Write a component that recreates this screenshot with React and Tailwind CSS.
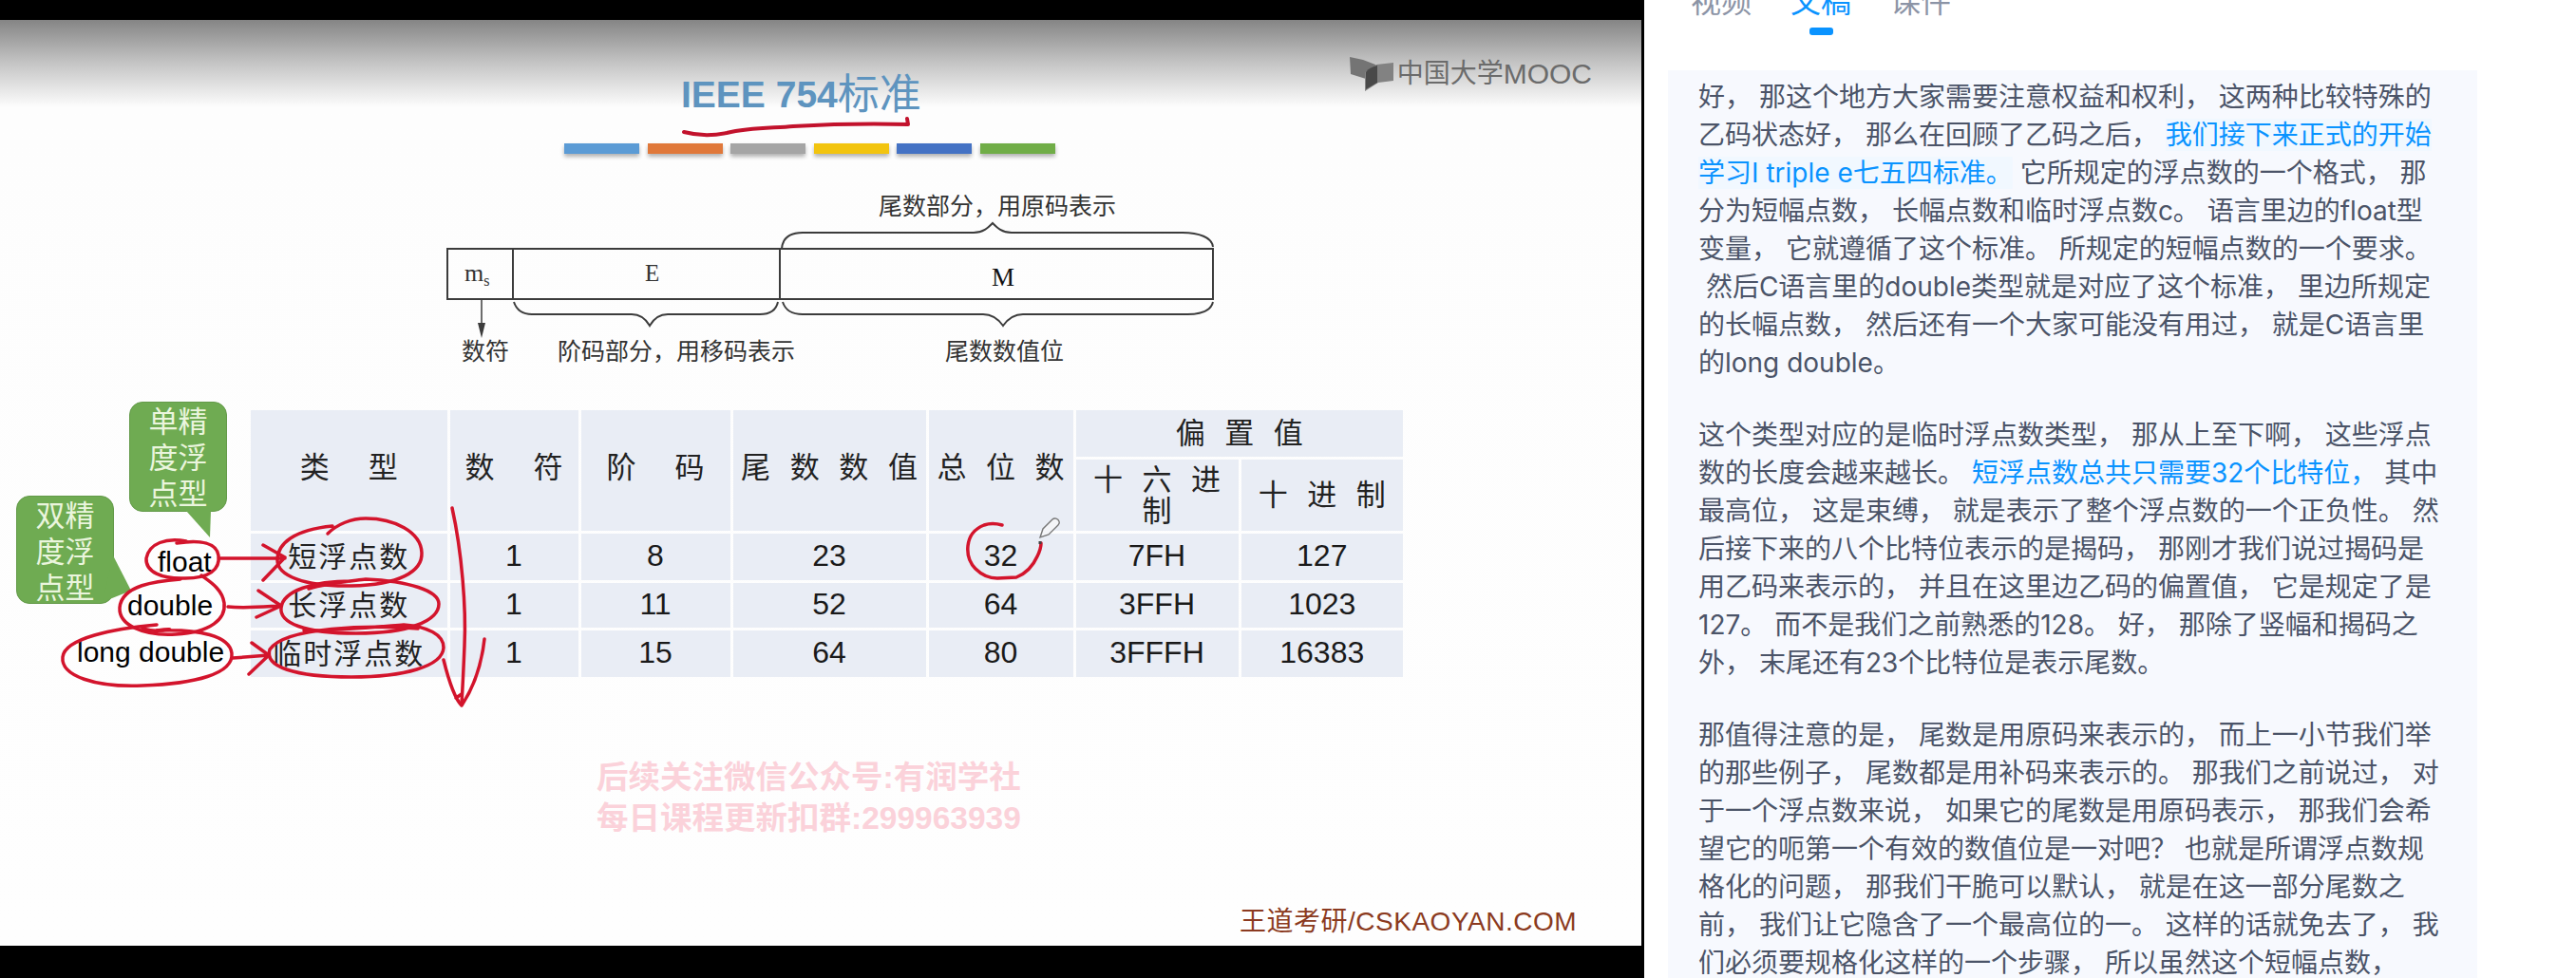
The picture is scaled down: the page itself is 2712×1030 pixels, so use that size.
const CJK = "font-['Liberation_Sans','Noto_Sans_CJK_SC',sans-serif]";

const barColors = ['bg-[#5b9bd5]', 'bg-[#e0783a]', 'bg-[#a5a5a5]', 'bg-[#f2c40f]', 'bg-[#4472c4]', 'bg-[#70ad47]'];

const rows = [
  ['短浮点数', '1', '8', '23', '32', '7FH', '127'],
  ['长浮点数', '1', '11', '52', '64', '3FFH', '1023'],
  ['临时浮点数', '1', '15', '64', '80', '3FFFH', '16383'],
];

function Cell({ className = '', children }) {
  return <div className={`bg-[#e9edf5] flex items-center justify-center text-center ${className}`}>{children}</div>;
}

function Head({ className = '', children }) {
  return (
    <Cell className={`text-[31px] leading-[33px] text-[#222] whitespace-pre-wrap [word-spacing:12px] ${className}`}>
      {children}
    </Cell>
  );
}

function FloatTable() {
  return (
    <div className="ml-[264px] mt-[42px] w-[1213px] grid grid-cols-[206.5px_135px_157px_203px_152px_171px_170.5px] grid-rows-[49px_75px_49px_47px_49px] gap-[3px]">
      <Head className="row-span-2 pb-[6px]">类  型</Head>
      <Head className="row-span-2 pb-[6px]">数  符</Head>
      <Head className="row-span-2 pb-[6px]">阶  码</Head>
      <Head className="row-span-2 pb-[6px]">尾 数 数 值</Head>
      <Head className="row-span-2 pb-[6px]">总 位 数</Head>
      <Head className="col-span-2">偏 置 值</Head>
      <Head className="px-[10px]">十 六 进 制</Head>
      <Head>十 进 制</Head>
      {rows.map((row) =>
        row.map((v, i) => (
          <Cell key={row[0] + i} className={i === 0 ? 'text-[30px] tracking-[2px] text-[#222]' : 'text-[32px] text-[#1a1a1a] pb-[4px]'}>
            {v}
          </Cell>
        ))
      )}
    </div>
  );
}

// 尾数/阶码 bit layout, drawn in page coordinates
function Diagram() {
  return (
    <svg className="block ml-[460px] mt-[38px]" width="840" height="190" viewBox="460 200 840 190" fill="none" stroke="#3c3c3c">
      <rect x="471" y="262" width="806" height="53" strokeWidth="2" />
      <path d="M540 262V315M821 262V315" strokeWidth="2" />
      <path d="M823 262C824 250 832 245 845 245H1025C1035 245 1040 240 1045 235C1050 240 1055 245 1065 245H1245C1262 245 1276 250 1277 260" strokeWidth="2" />
      <path d="M541 318C544 327 550 331 560 331H665C675 331 680 336 684 343C688 336 693 331 703 331H800C810 331 817 327 819 318" strokeWidth="2" />
      <path d="M824 318C827 327 833 331 845 331H1035C1045 331 1051 336 1056 343C1061 336 1067 331 1077 331H1250C1265 331 1275 327 1277 318" strokeWidth="2" />
      <path d="M507 315V350" strokeWidth="1.5" />
      <path d="M503 340L507 356L511 340Z" fill="#3c3c3c" stroke="none" />
      <g fill="#333" stroke="none" fontFamily="'Liberation Serif','Noto Sans CJK SC',serif" fontSize="25">
        <text x="489" y="296" fontSize="26">m<tspan fontSize="16" dy="5">s</tspan></text>
        <text x="679" y="296">E</text>
        <text x="1044" y="301" fontSize="27" fill="#111">M</text>
        <text x="925" y="226">尾数部分，用原码表示</text>
        <text x="486" y="379">数符</text>
        <text x="587" y="379">阶码部分，用移码表示</text>
        <text x="995" y="379">尾数数值位</text>
      </g>
    </svg>
  );
}

// pen annotations from the recorded lecture, plus the callout tails
function InkLayer() {
  return (
    <svg className="absolute inset-0 pointer-events-none" width="1728" height="975" viewBox="0 21 1728 975" fill="none">
      <path d="M196 538L222 538L221 566Z" fill="#6fab52" />
      <path d="M119 585L138 622L108 634Z" fill="#6fab52" />
      <g stroke="#d3142c" strokeWidth="3.5" strokeLinecap="round" strokeLinejoin="round">
        <path d="M720 139C735 143 750 143 765 140C790 134 815 135 835 133C870 131 920 130 956 131L955 125" stroke="#c2122c" strokeWidth="4" />
        <path d="M196 570C175 566 157 572 154 588C153 602 170 610 195 609C220 609 232 600 230 585C228 572 212 568 186 572" />
        <path d="M190 610C165 612 128 616 126 640C125 658 150 670 185 668C222 666 238 652 236 635C234 620 220 612 212 606" />
        <path d="M165 658C120 662 68 672 66 692C64 712 100 724 150 722C205 720 246 710 244 688C242 670 210 662 165 664C195 660 170 668 150 662" />
        <path d="M350 554C310 558 292 572 292 590C292 606 320 618 370 617C420 616 445 602 444 582C443 560 415 546 385 546C370 546 355 552 345 562" />
        <path d="M370 612C330 612 298 622 296 640C294 656 320 667 375 667C430 667 462 654 462 636C462 622 430 612 385 610C370 612 345 614 325 620" />
        <path d="M440 662C390 658 300 660 284 684C278 702 310 713 370 713C425 713 466 702 467 682C467 668 450 660 425 658C400 660 360 664 320 664" />
        <path d="M231 588H300M277 574L300 587L277 611" />
        <path d="M240 639C258 641 278 639 296 638M272 622L296 638L270 650" />
        <path d="M245 693C258 692 270 691 283 690M265 677L283 690L262 710" />
        <path d="M476 535C486 580 491 640 489 680C488 705 487 725 486 741" />
        <path d="M480 735L486 731M467 695C472 715 478 735 486 743C498 725 507 700 510 673" />
        <path d="M1055 553C1048 551 1042 551 1036 553C1026 557 1020 565 1019 575C1018 585 1021 593 1027 599C1033 605 1040 609 1050 609L1070 608C1080 604 1088 595 1092 586C1095 580 1096 576 1096 572" />
      </g>
      <path d="M1095 566L1098 557L1108 547C1110 545 1114 546 1115 549C1116 551 1115 552 1114 553L1104 563Z" stroke="#777" strokeWidth="1.4" fill="#f4f5f8" />
      <path d="M1095 570V573" stroke="#444" strokeWidth="3" />
    </svg>
  );
}

function Callout({ className, lines }) {
  return (
    <div className={`absolute w-[103px] rounded-[14px] bg-[#6fab52] border border-[#639a49] text-[#eaf5dd] text-[31px] leading-[38px] text-center ${className}`}>
      {lines.map((l) => (
        <div key={l}>{l}</div>
      ))}
    </div>
  );
}

function Slide() {
  return (
    <div className="relative w-[1728px] h-[975px] overflow-hidden bg-[linear-gradient(#858585_0,#c4c4c4_45px,#fdfdfd_92px,#fefefe_100%)]">
      {/* title row */}
      <div className="h-[130px] pl-[717px] pr-[52px] flex justify-between items-start">
        <div className="mt-[57px] h-[44px] flex items-center text-[#5e94bf]">
          <span className="font-bold text-[39px]">IEEE 754</span>
          <span className="text-[44px] leading-[44px]">标准</span>
        </div>
        <div className="mt-[38px] flex items-center text-[#6b6b6b]">
          <svg width="46" height="38" viewBox="0 0 46 38" className="mr-[4px]">
            <path d="M0 1L14 4L27 9V14L17 17V24L1 19Z" fill="#747474" />
            <path d="M28 9L46 7V26L30 28L16 37V17Z" fill="#828282" />
            <path d="M17 17C20 13 24 11 29 10V28L17 35Z" fill="#494949" />
          </svg>
          <span className="text-[28px] leading-[38px]">中国大学</span>
          <span className="text-[30px] leading-[38px]">MOOC</span>
        </div>
      </div>

      <div className="ml-[594px] flex gap-[8.6px]">
        {barColors.map((c) => (
          <div key={c} className={`w-[79px] h-[11px] shadow-[0_3px_4px_rgba(0,0,0,0.3)] ${c}`} />
        ))}
      </div>

      <Diagram />
      <FloatTable />

      <div className="ml-[628px] mt-[84px] text-[33.5px] leading-[43px] font-bold text-[#fbd2da]">
        <div>后续关注微信公众号:有润学社</div>
        <div>每日课程更新扣群:299963939</div>
      </div>
      <div className="mt-[73px] pr-[68px] text-right text-[28px] tracking-[0.5px] leading-[30px] text-[#8b3a20]">王道考研/CSKAOYAN.COM</div>

      {/* overlays on the table */}
      <Callout className="left-[136px] top-[402px] h-[116px] pt-[2px]" lines={['单精', '度浮', '点型']} />
      <Callout className="left-[17px] top-[501px] h-[114px] pt-[2px]" lines={['双精', '度浮', '点型']} />
      <span className="absolute left-[166px] top-[552px] text-[30px] leading-[38px] text-black">float</span>
      <span className="absolute left-[134px] top-[598px] text-[30px] leading-[38px] text-black">double</span>
      <span className="absolute left-[81px] top-[647px] text-[30px] leading-[38px] text-black">long double</span>
      <InkLayer />
    </div>
  );
}

function Transcript() {
  return (
    <div className="ml-[25px] w-[852px] flex-1 overflow-hidden bg-[#f7f9fe] px-[32px] pt-[8px] text-[28px] leading-[40px] text-[#4b5468] font-['Inter','Noto_Sans_CJK_SC',sans-serif]">
      <p>
        好， 那这个地方大家需要注意权益和权利， 这两种比较特殊的乙码状态好， 那么在回顾了乙码之后，{' '}
        <span className="text-[#0a93ff] bg-[#f1f8ff]">我们接下来正式的开始学习I triple e七五四标准。</span>{' '}
        它所规定的浮点数的一个格式， 那分为短幅点数， 长幅点数和临时浮点数c。 语言里边的float型变量， 它就遵循了这个标准。 所规定的短幅点数的一个要求。<wbr />{'\u00a0'}然后C语言里的double类型就是对应了这个标准， 里边所规定的长幅点数， 然后还有一个大家可能没有用过， 就是C语言里的long double。
      </p>
      <p className="mt-[36px]">
        这个类型对应的是临时浮点数类型， 那从上至下啊， 这些浮点数的长度会越来越长。{' '}
        <span className="text-[#0a93ff]">短浮点数总共只需要32个比特位，</span>{' '}
        其中最高位， 这是束缚， 就是表示了整个浮点数的一个正负性。 然后接下来的八个比特位表示的是揭码， 那刚才我们说过揭码是用乙码来表示的， 并且在这里边乙码的偏置值， 它是规定了是127。 而不是我们之前熟悉的128。 好， 那除了竖幅和揭码之外， 末尾还有23个比特位是表示尾数。
      </p>
      <p className="mt-[36px]">
        那值得注意的是， 尾数是用原码来表示的， 而上一小节我们举的那些例子， 尾数都是用补码来表示的。 那我们之前说过， 对于一个浮点数来说， 如果它的尾数是用原码表示， 那我们会希望它的呃第一个有效的数值位是一对吧？ 也就是所谓浮点数规格化的问题， 那我们干脆可以默认， 就是在这一部分尾数之前， 我们让它隐含了一个最高位的一。 这样的话就免去了， 我们必须要规格化这样的一个步骤， 所以虽然这个短幅点数，
      </p>
    </div>
  );
}

export default function App() {
  return (
    <div className={`flex w-[2712px] h-[1030px] overflow-hidden bg-white ${CJK}`}>
      <div className="w-[1731px] h-full bg-black pt-[21px]">
        <Slide />
      </div>
      <div className="flex-1 h-full flex flex-col">
        <div className="-mt-[14px] h-[88px] pl-[49px] flex gap-[41px] text-[32px] leading-[32px] text-[#8c94a6] shrink-0">
          <span>视频</span>
          <div className="flex flex-col items-center text-[#0a93ff]">
            <span>文稿</span>
            <div className="mt-[11px] w-[25px] h-[8px] rounded-[3px] bg-[#0a93ff]" />
          </div>
          <span>课件</span>
        </div>
        <Transcript />
      </div>
    </div>
  );
}
